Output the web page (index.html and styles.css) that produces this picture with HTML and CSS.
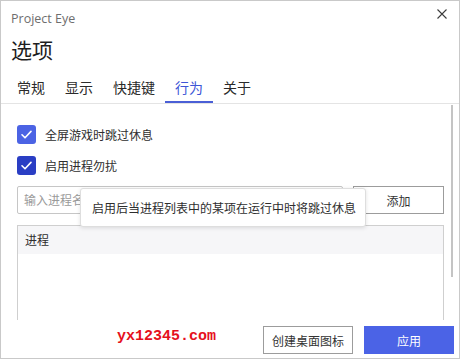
FILE: index.html
```html
<!DOCTYPE html>
<html lang="zh-CN">
<head>
<meta charset="utf-8">
<title>Project Eye - 选项</title>
<link rel="stylesheet" href="styles.css">
</head>
<body>
<div class="window">
  <div class="titlebar">
    <span class="app-name">Project Eye</span>
    <button class="close" aria-label="关闭">
      <svg width="10" height="10" viewBox="0 0 10 10"><path d="M0.5 0.5 L9.5 9.5 M9.5 0.5 L0.5 9.5" stroke="#3c3c3c" stroke-width="1.1" fill="none"/></svg>
    </button>
  </div>
  <h1 class="heading">选项</h1>
  <nav class="tabs">
    <span class="tab">常规</span>
    <span class="tab">显示</span>
    <span class="tab">快捷键</span>
    <span class="tab active">行为</span>
    <span class="tab">关于</span>
  </nav>
  <div class="content">
    <label class="check-row">
      <span class="checkbox">
        <svg width="19" height="19" viewBox="0 0 19 19"><path d="M5 9.8 L8 12.8 L14 6.4" stroke="#fff" stroke-width="1.6" fill="none" stroke-linecap="round" stroke-linejoin="round"/></svg>
      </span>
      <span class="check-label">全屏游戏时跳过休息</span>
    </label>
    <label class="check-row">
      <span class="checkbox hover">
        <svg width="19" height="19" viewBox="0 0 19 19"><path d="M5 9.8 L8 12.8 L14 6.4" stroke="#fff" stroke-width="1.6" fill="none" stroke-linecap="round" stroke-linejoin="round"/></svg>
      </span>
      <span class="check-label">启用进程勿扰</span>
    </label>
    <div class="input-row">
      <div class="text-input">输入进程名</div>
      <button class="btn add-btn">添加</button>
    </div>
    <div class="list">
      <div class="list-header">进程</div>
      <div class="list-body"></div>
    </div>
    <div class="tooltip">启用后当进程列表中的某项在运行中时将跳过休息</div>
    <div class="scrollbar"></div>
  </div>
  <div class="footer">
    <button class="btn">创建桌面图标</button>
    <button class="btn primary">应用</button>
  </div>
  <div class="watermark">yx12345.com</div>
</div>
</body>
</html>
```
FILE: styles.css
```css
* { box-sizing: border-box; }
html, body { margin: 0; padding: 0; background: #fff; }
body {
  font-family: "Noto Sans CJK SC", "Noto Sans", sans-serif;
  color: #333;
}
.window {
  position: relative;
  width: 460px;
  height: 359px;
  border: 1px solid #c9c9c9;
  background: #fff;
  display: flex;
  flex-direction: column;
  overflow: hidden;
}
.titlebar {
  display: flex;
  justify-content: space-between;
  align-items: flex-start;
  padding: 9px 12px 0 10px;
  height: 27px;
}
.app-name {
  font-family: "Open Sans", "Noto Sans", sans-serif;
  font-size: 12.5px;
  line-height: 18px;
  color: #6e6e6e;
}
.close {
  border: 0;
  background: none;
  padding: 0;
  margin-top: -1px;
  width: 10px;
  height: 10px;
  display: flex;
}
.heading {
  margin: 6px 0 0 10px;
  font-size: 21px;
  font-weight: 400;
  line-height: 30px;
  color: #1e1e1e;
}
.tabs {
  margin-top: 6px;
  display: flex;
  padding-left: 6px;
  border-bottom: 1px solid #e4e4e4;
}
.tab {
  padding: 7px 10px 4px;
  font-size: 14px;
  line-height: 20px;
  color: #2a2a2a;
  border-bottom: 2px solid transparent;
}
.tab.active {
  color: #3d55d6;
  border-bottom-color: #4a5fd6;
}
.content {
  position: relative;
  height: 216px;
  overflow: hidden;
  padding: 21px 15px 0 16px;
  display: flex;
  flex-direction: column;
}
.check-row {
  display: flex;
  align-items: center;
  gap: 9px;
  height: 19px;
  margin-bottom: 12px;
}
.check-row:nth-of-type(2) { margin-bottom: 11px; }
.checkbox {
  width: 19px;
  height: 19px;
  border-radius: 3px;
  background: #4b63e4;
  display: flex;
}
.checkbox.hover { background: #2a3ec4; }
.check-label {
  font-size: 12px;
  line-height: 19px;
  color: #2e2e2e;
}
.input-row {
  display: flex;
  gap: 10px;
  height: 28px;
}
.text-input {
  flex: 1;
  border: 1px solid #c6c6c6;
  border-radius: 2px;
  padding: 0 6px;
  font-size: 12px;
  line-height: 26px;
  color: #9a9a9a;
}
.btn {
  font-family: "Noto Sans CJK SC", "Noto Sans", sans-serif;
  font-size: 12px;
  color: #333;
  background: #fff;
  border: 1px solid #9c9c9c;
  border-radius: 0;
  height: 28px;
  width: 90px;
  padding: 0;
}
.add-btn { width: 91px; }
.list {
  margin-top: 11px;
  border: 1px solid #cfcfcf;
  border-bottom: 0;
  flex: 1;
  display: flex;
  flex-direction: column;
}
.list-header {
  background: #f6f6f8;
  height: 28px;
  padding-left: 7px;
  font-size: 12px;
  line-height: 28px;
  color: #2e2e2e;
}
.list-body { flex: 1; background: #fff; }
.tooltip {
  position: absolute;
  left: 79px;
  top: 84px;
  width: 286px;
  height: 39px;
  background: #fff;
  border: 1px solid #dedede;
  border-radius: 3px;
  box-shadow: 0 1px 4px rgba(0, 0, 0, 0.12);
  padding-left: 11px;
  font-size: 12px;
  line-height: 37px;
  white-space: nowrap;
  color: #2e2e2e;
}
.scrollbar {
  position: absolute;
  left: 450px;
  top: 1px;
  width: 2px;
  height: 172px;
  background: #c4c4c4;
}
.footer {
  display: flex;
  justify-content: flex-end;
  gap: 11px;
  padding: 6px 5px 0 0;
  height: 38px;
}
.btn.primary {
  background: #4b63e6;
  border-color: #4b63e6;
  color: #fff;
}
.watermark {
  position: absolute;
  left: 116px;
  top: 326px;
  font-family: "Liberation Mono", "Courier New", monospace;
  font-weight: 700;
  font-size: 15px;
  line-height: 20px;
  color: #e5101c;
}
```
